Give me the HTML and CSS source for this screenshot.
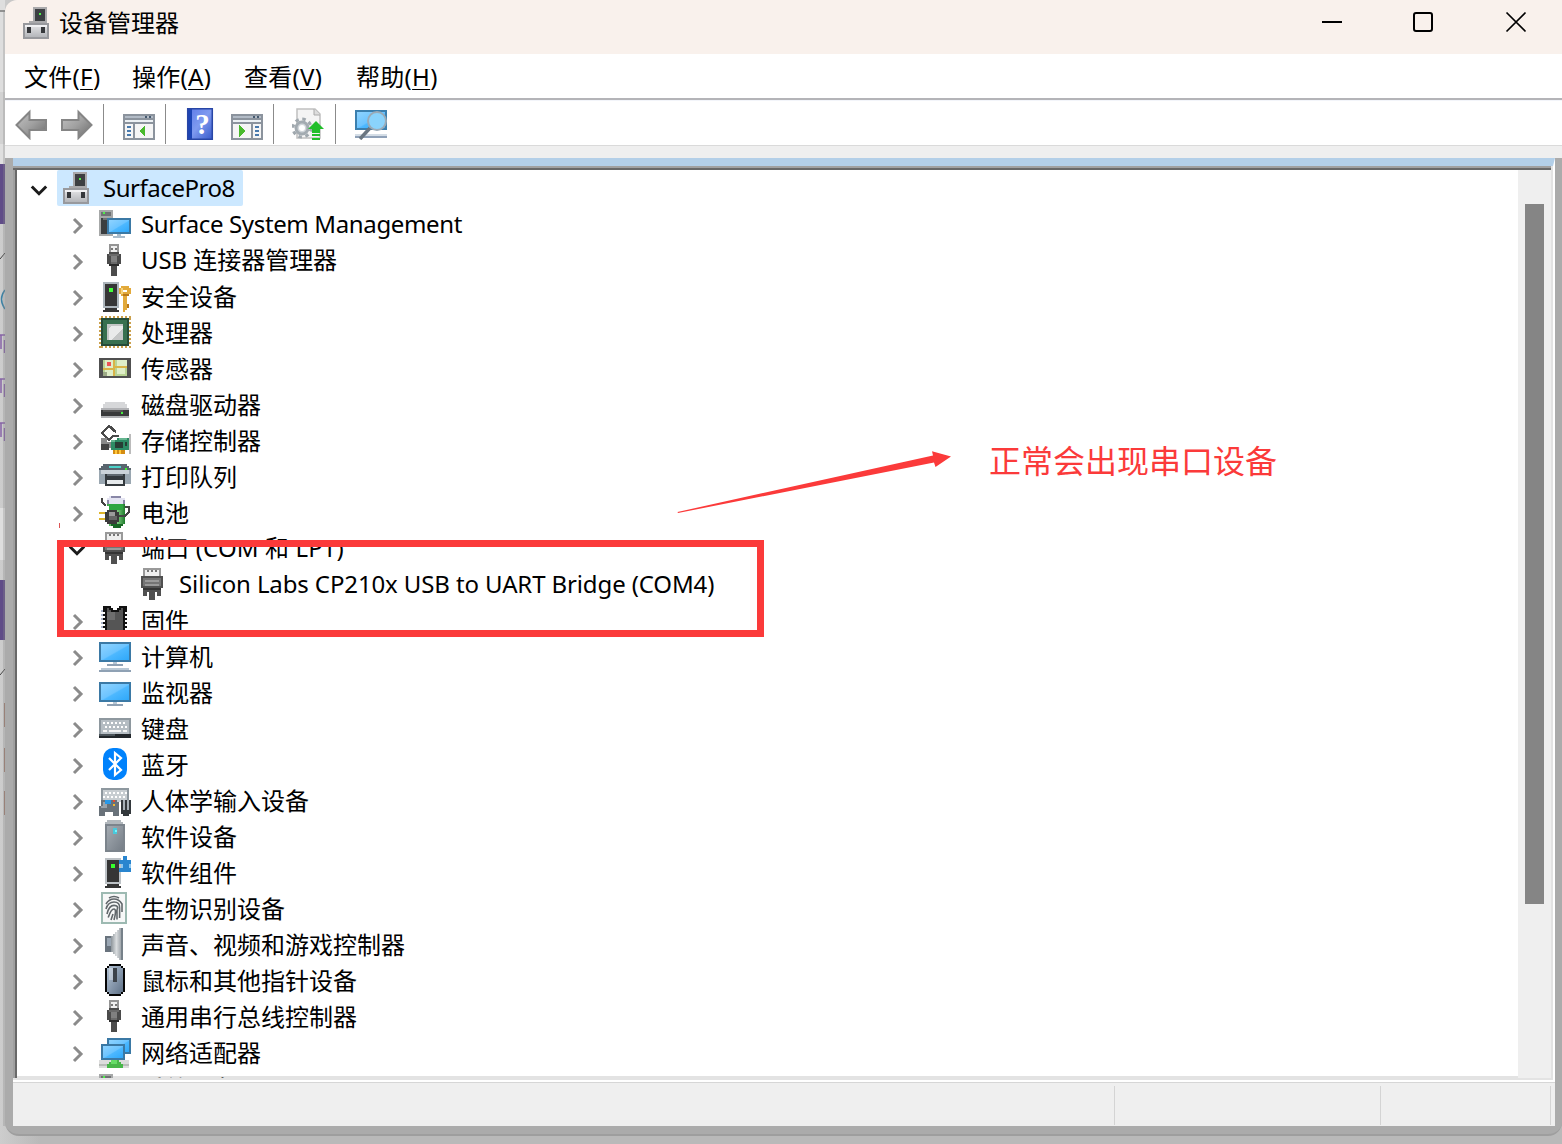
FILE: index.html
```html
<!DOCTYPE html>
<html lang="zh-CN">
<head>
<meta charset="utf-8">
<title>设备管理器</title>
<link rel="stylesheet" href="styles.css">
</head>
<body>
<svg class="defs" width="0" height="0" aria-hidden="true">
  <defs>
    <linearGradient id="screen" x1="0" y1="0" x2="1" y2="1"><stop offset="0" stop-color="#8fd3ff"/><stop offset=".5" stop-color="#6cc4ff"/><stop offset=".55" stop-color="#4db8ff"/><stop offset="1" stop-color="#2fa8fa"/></linearGradient>
    <linearGradient id="metal" x1="0" y1="0" x2="0" y2="1"><stop offset="0" stop-color="#e4e4e6"/><stop offset="1" stop-color="#b4b6ba"/></linearGradient>
    <linearGradient id="steel" x1="0" y1="0" x2="1" y2="1"><stop offset="0" stop-color="#a4abb2"/><stop offset="1" stop-color="#767e87"/></linearGradient>
    <linearGradient id="arrow" x1="0" y1="0" x2="1" y2="1"><stop offset="0" stop-color="#c4c4c4"/><stop offset=".5" stop-color="#a0a0a0"/><stop offset="1" stop-color="#6a6a6a"/></linearGradient>
    <linearGradient id="help" x1="0" y1="0" x2="1" y2="1"><stop offset="0" stop-color="#5b78e6"/><stop offset=".5" stop-color="#7f9af0"/><stop offset="1" stop-color="#3457c8"/></linearGradient>
    <linearGradient id="cone" x1="0" y1="0" x2="1" y2="0"><stop offset="0" stop-color="#8c949a"/><stop offset=".45" stop-color="#dadddf"/><stop offset="1" stop-color="#878f96"/></linearGradient>
    <linearGradient id="cell" x1="0" y1="0" x2="1" y2="0"><stop offset="0" stop-color="#2c9a3a"/><stop offset=".4" stop-color="#a2eda0"/><stop offset="1" stop-color="#1d7a2a"/></linearGradient>
    <linearGradient id="shell" x1="0" y1="0" x2="1" y2="1"><stop offset="0" stop-color="#b4c4d6"/><stop offset="1" stop-color="#5e7086"/></linearGradient>
  </defs>
  <symbol id="chev-r" viewBox="0 0 20 20"><path d="M7 3l7 7-7 7" fill="none" stroke="#8b8b8b" stroke-width="3"/></symbol>
  <symbol id="chev-d" viewBox="0 0 20 20"><path d="M2.800 6.500l7.200 7.200 7.200-7.200" fill="none" stroke="#1b1b1b" stroke-width="3"/></symbol>
  <symbol id="i-root" viewBox="0 0 16 16">
    <path fill="#a9a9ab" d="M6 0h7v8H6zM4 7h3v1H4z"/><path fill="#3c3f42" d="M7 1h5v6H7z"/><path fill="#4ff04a" d="M9 3h1v1H9z"/>
    <path fill="#98999d" d="M1 8h13v8H1z"/><path fill="url(#metal)" d="M2 9h11v6H2z"/><path fill="#f1f1f3" d="M2 9h11v1H2z"/><path fill="#36383b" d="M3 10h2v3H3zM10 10h2v3h-2z"/>
  </symbol>
  <symbol id="i-pc" viewBox="0 0 16 16">
    <path fill="#a6a8a8" d="M0 1h7v13H0z"/><path fill="#3b3e40" d="M1 5h4v8H1z"/><path fill="#707274" d="M1 2h5v2H1zM2 5h3v1H2z"/><path fill="#4ff04a" d="M2 2h1v1H2z"/>
    <path fill="#3b79a5" d="M4 5h12v8H4z"/><path fill="url(#screen)" d="M5 6h10v6H5z"/><path fill="#a9bccb" d="M9 13h2v1H9zM7 14h6v1H7z"/>
  </symbol>
  <symbol id="i-usb" viewBox="0 0 16 16">
    <path fill="#949494" d="M5 0h5v5H5z"/><path fill="#eee" d="M6 1h3v3H6z"/><path fill="#777" d="M6 2h1v1H6zM8 2h1v1H8z"/>
    <path fill="#4b4b4b" d="M5 4h5v1h1v5h-1v1H9v5H6v-5H5v-1H4V5h1z"/><path fill="#6a6a6a" d="M5 5h5v1H5zM6 6h3v4H6z"/><path fill="#808080" d="M6 6h3v3H6z"/><path fill="#2c2c2c" d="M5 10h5v1H5z"/>
  </symbol>
  <symbol id="i-sec" viewBox="0 0 16 16">
    <path fill="#acb5bb" d="M2 1h8v13H2z"/><path fill="#363636" d="M3 2h6v11H3zM2 15h8v1H2z"/><path fill="#363636" d="M3 14h6v1H3z"/><path fill="#43ff3a" d="M5 4h2v2H5z"/>
    <path fill="#e2a93a" d="M11 3h4v1h1v3h-1v1h-1v7h-1v1h-1V8h-1V7h-1V4h1z"/><path fill="#fff" d="M12 5h2v1h-2z"/><path fill="#f6d27c" d="M11 4h1v3h-1z"/><path fill="#b97818" d="M14 12h1v2h-1zM12 7h3v1h-3z"/>
  </symbol>
  <symbol id="i-cpu" viewBox="0 0 16 16">
    <path fill="none" stroke="#cba04c" stroke-dasharray="1 1" d="M1 .5h15M1 15.500h15M.5 1v15M15.500 1v15"/><path fill="#254b38" d="M1 1h14v14H1z"/><path fill="#38704f" d="M2 2h12v12H2z"/><path fill="#c4c6c6" d="M4 4h8v8H4z"/><path fill="#e9eaea" d="M5 10V6l1-1h6v1l-6 6H5z"/>
  </symbol>
  <symbol id="i-sensor" viewBox="0 0 16 16">
    <path fill="#505050" d="M0 3h16v10H0z"/><path fill="#b9d494" d="M2 4h12v8H2z"/><path fill="#dfeec8" d="M3 4h4v4H3zM9 4h5v3H9zM3 9h4v3H3zM9 8h4v3H9z"/><path fill="#d9b448" d="M7 4h1v8H7zM2 8h5v1H2zM8 7h6v1H8z"/><path fill="#ec5558" d="M4 5h2v2H4z"/><path fill="#9dab86" d="M2 10h2v2H2z"/>
  </symbol>
  <symbol id="i-disk" viewBox="0 0 16 16">
    <path fill="#d6d7d9" d="M3 7h10v1h1v2h1v1H1v-1h1V8h1z"/><path fill="#b0b1b4" d="M1 10h14v5H1z"/><path fill="#393a3b" d="M1 11h14v3H1z"/><path fill="#555" d="M2 11h10v1H2z"/><path fill="#45ed3f" d="M11 12h1v1h-1z"/>
  </symbol>
  <symbol id="i-storage" viewBox="0 0 16 16">
    <path fill="none" stroke="#4a4a4a" stroke-width="1.300" d="M8.500 4L5 1 1.500 4.500 5 8l2-2h3"/><path fill="#8a8a8a" d="M1 7h3v2h2v3H1z"/><path fill="#444" d="M1 10h4v3H1z"/><path fill="#bbb" d="M15 5h1v10h-1z"/>
    <path fill="#2d8b65" d="M6 8h3V7h6v6H6z"/><path fill="#66b590" d="M10 7h4v1h-4zM6 8h2v1H6z"/><path fill="#283d35" d="M8 9h4v3H8zM13 9h1v2h-1z"/><path fill="#d48c13" d="M7 13h6v2H7z"/><path fill="#ffc739" d="M8 13h1v2H8zM10 13h1v2h-1z"/>
  </symbol>
  <symbol id="i-printer" viewBox="0 0 16 16">
    <path fill="#59656e" d="M2 2h12v1h1v1h1v1H0V4h1V3h1z"/><path fill="#4bd2c9" d="M5 3h6v1H5z"/><path fill="#9aa7b1" d="M0 5h16v7H0z"/><path fill="#cbd3d9" d="M1 5h14v2H1z"/><path fill="#343a3e" d="M3 7h10v6H3z"/><path fill="#606970" d="M4 7h8v1H4z"/><path fill="#e6eaec" d="M4 10h8v2H4z"/><path fill="#3ef332" d="M13 4h1v1h-1z"/>
  </symbol>
  <symbol id="i-battery" viewBox="0 0 16 16">
    <path fill="#e4e4f2" d="M5 0h6v1h2v3H4V1h1z"/><path fill="#8987a7" d="M6 0h5v1H6zM4 2h1v2H4zM12 2h1v2h-1z"/><path fill="url(#cell)" d="M4 4h9v10h-1v1H9v1H7v-1H5V5H4z"/><path fill="#2fa542" d="M5 4h7v3H5z"/><path fill="#176624" d="M6 14h6v1h-1v1H7v-1H6z"/>
    <path fill="none" stroke="#444" stroke-width="1.200" d="M1.500 1v2l2 2M9 10h4l2-2V5.500h-2"/><path fill="#dfb52a" d="M0 8h4v1H0zM0 11h4v1H0z"/><path fill="#3b3b3b" d="M4 7h5v1h1v5H9v1H4v-1H3V8h1z"/><path fill="#9b9b9b" d="M5 8h3v2H5z"/><path fill="#666" d="M5 10h4v2H5z"/>
  </symbol>
  <symbol id="i-port" viewBox="0 0 16 16">
    <path fill="#999" d="M3 0h9v5H3z"/><path fill="#eee" d="M4 1h7v3H4z"/><path fill="#777" d="M5 1h1v1H5zM7 1h1v1H7zM9 1h1v1H9z"/><path fill="#505050" d="M2 4h11v6h-1v4h-2v-2H9v4H6v-4H5v2H3v-4H2z"/><path fill="#747474" d="M3 5h9v4H3z"/><path fill="#9a9a9a" d="M4 6h7v1H4zM4 8h7v1H4z"/><path fill="#343434" d="M3 10h9v1H3z"/>
  </symbol>
  <symbol id="i-firmware" viewBox="0 0 16 16">
    <path fill="none" stroke="#aeb7cc" stroke-width="2" stroke-dasharray="1 1" d="M2 3v12M13 3v12"/><path fill="#111" d="M2 1h4v1h1v1h2V2h1V1h4v3h-1v1h1v1h-1v1h1v1h-1v1h1v1h-1v1h1v1h-1v3H3v-3H2v-1h1v-1H2V9h1V8H2V7h1V6H2V5h1V4H2z"/><path fill="#555" d="M4 2h1v1h1v1h4V3h1V2h1v12H4z"/><path fill="#6e6e6e" d="M4 4h4v4H4z"/>
  </symbol>
  <symbol id="i-computer" viewBox="0 0 16 16">
    <path fill="#3b79a5" d="M0 1h16v10H0z"/><path fill="url(#screen)" d="M1 2h14v8H1z"/><path fill="#b9c8d5" d="M7 11h2v1H7zM1 14h14v1H1z"/><path fill="#8fa1b4" d="M4 12h8v1H4zM0 15h16v1H0z"/>
  </symbol>
  <symbol id="i-monitor" viewBox="0 0 16 16">
    <path fill="#3b79a5" d="M0 3h16v10H0z"/><path fill="url(#screen)" d="M1 4h14v8H1z"/><path fill="#b9c8d5" d="M7 13h2v1H7z"/><path fill="#8fa1b4" d="M4 14h8v1H4z"/>
  </symbol>
  <symbol id="i-keyboard" viewBox="0 0 16 16">
    <path fill="#8e989f" d="M0 3h16v8H0z"/><path fill="#b5bdc3" d="M1 4h14v7H1z"/><path fill="none" stroke="#fff" stroke-dasharray="1 1" d="M2 5.500h12M3 7.500h11"/><path fill="#f5f5f5" d="M2 9h2v1H2zM5 9h6v1H5zM12 9h2v1h-2z"/><path fill="#22272b" d="M0 11h16v2H0z"/><path fill="#4b545a" d="M0 11h8v1H0z"/>
  </symbol>
  <symbol id="i-bt" viewBox="0 0 16 16">
    <rect shape-rendering="geometricPrecision" x="2" width="12" height="16" rx="5" fill="#0082fc"/><path shape-rendering="geometricPrecision" fill="none" stroke="#fff" stroke-width="1.100" d="M5 5l6 6-3 2.500v-11L11 5l-6 6"/>
  </symbol>
  <symbol id="i-hid" viewBox="0 0 16 16">
    <path fill="#8e989f" d="M1 2h14v7H1z"/><path fill="#c7cdd1" d="M2 3h12v6H2z"/><path fill="none" stroke="#fff" stroke-dasharray="1 1" d="M3 4.500h11M2 6.500h12"/><path fill="#69727a" d="M1 8h8v1h1v7H7v-2H3v2H0v-5h1z"/><path fill="#9aa2a9" d="M2 9h2v3H1v-1h1z"/><path fill="#2898e7" d="M3 8h3v2H3z"/><path fill="#e44b33" d="M7 8h1v1H7z"/><path fill="#f2ba30" d="M7 10h1v1H7z"/><path fill="#33383c" d="M11 8h5v7h-1v1h-3v-1h-1z"/><path fill="#a7b0b7" d="M12 8h1v5h-1zM14 8h1v5h-1z"/>
  </symbol>
  <symbol id="i-softdev" viewBox="0 0 16 16">
    <path fill="#b2b8bd" d="M4 0h7v1h1v1h1v14H3V1h1z"/><path fill="#7c848c" d="M3 2h10v14H3z"/><path fill="url(#steel)" d="M4 3h8v12H4z"/><path fill="#48c9dc" d="M7 4h2v3H7z"/><path fill="#75f5ff" d="M8 5h1v1H8z"/>
  </symbol>
  <symbol id="i-softcomp" viewBox="0 0 16 16">
    <path fill="#bdc2c6" d="M3 1h8v13H3z"/><path fill="#353535" d="M4 2h6v11H4zM3 15h8v1H3zM4 14h6v1H4z"/><path fill="#36ff2c" d="M6 4h2v2H6z"/><path fill="#2985cf" d="M12 0h2v2h2v6h-6V6h1V4h-1V2h2z"/><path fill="#8ec8f1" d="M11 4h1v2h-1zM15 4h1v2h-1z"/>
  </symbol>
  <symbol id="i-bio" viewBox="0 0 16 16">
    <path fill="#9dbab2" d="M1 0h13v16H1z"/><path fill="#f7f8f8" d="M2 1h11v14H2z"/><g shape-rendering="geometricPrecision" fill="none" stroke="#61676b" stroke-width=".8"><path d="M5 3Q7.500 1.500 10 3M3.500 6Q5 3.500 7.500 3.500T11.500 6v4M3.500 8.500Q4.500 5 7.500 5t2.800 3v5M4 11q1-4.300 3.500-4.300T9 9v4.800M4.600 12.800Q6 8.500 7.500 8.500T7.500 14M6 14l1-3"/></g>
  </symbol>
  <symbol id="i-sound" viewBox="0 0 16 16">
    <path fill="#69737d" d="M3 4h3v8H3z"/><path fill="#9ba7b4" d="M4 5h2v4H4z"/><path fill="url(#cone)" d="M6 4h1V3h1V2h1V1h1V0h2v16h-2v-1H9v-1H8v-1H7v-1H6z"/><path fill="#77818a" d="M11 0h1v16h-1z"/>
  </symbol>
  <symbol id="i-mouse" viewBox="0 0 16 16">
    <path fill="#050505" d="M5 0h6v1h1v1h1v12h-1v1h-1v1H5v-1H4v-1H3V2h1V1h1z"/><path fill="url(#shell)" d="M5 1h6v1h1v12h-1v1H5v-1H4V2h1z"/><path fill="#fff" opacity=".35" d="M5 2h2v6H5z"/><path fill="#3c4249" d="M7 2h2v7H7z"/>
  </symbol>
  <symbol id="i-net" viewBox="0 0 16 16">
    <path fill="#3b79a5" d="M4 1h12v8H4z"/><path fill="url(#screen)" d="M5 2h10v6H5z"/><path fill="#dcdcdc" d="M0 12h15v4H0z"/><path fill="#b9bcb9" d="M0 14h15v1H0z"/><path fill="#3b79a5" d="M1 4h12v8H1z"/><path fill="url(#screen)" d="M2 5h10v6H2z"/><path fill="#48b649" d="M6 12h4v1h1v1h1v2H4v-2h1v-1h1z"/><path fill="#65dc65" d="M6 12h3v2H6z"/>
  </symbol>
</svg>

<div class="desktop">
  <svg class="behind" viewBox="0 0 5 1144" width="5" height="1144">
    <path fill="#dedede" d="M0 0h5v92H0z"/><path fill="#d2d2d2" d="M0 92h5v52H0z"/><path fill="#dfdfdf" d="M0 144h5v20H0zM0 508h5v52H0z"/>
    <path fill="#604c88" d="M0 164h5v60H0zM0 580h5v60H0z"/>
    <path fill="none" stroke="#444" d="M0 259l5-6M0 675l5-6M0 11h5"/><path fill="none" stroke="#3d82a4" stroke-width="1.500" d="M5 290q-7 9 0 19"/>
    <path fill="none" stroke="#8663a6" stroke-width="1.500" d="M0 335h5M1 335v14M4.500 340v13M0 379h5M1 379v14M4.500 384v13M0 423h5M1 423v14M4.500 428v13"/><path fill="#a17e72" d="M4 703h1v24H4zM4 748h1v24H4zM4 791h1v24H4z"/>
    <path fill="#888" d="M3 10h2v1116H3z" opacity=".3"/>
  </svg>
  <main class="window">
    <header class="titlebar">
      <svg class="app-icon" width="32" height="32"><use href="#i-root"/></svg>
      <h1 class="title">设备管理器</h1>
      <svg class="captions" width="230" height="54" viewBox="0 0 230 54" fill="none" stroke="#000" stroke-width="2">
        <path shape-rendering="crispEdges" d="M17 22h20"/><rect x="109" y="13" width="18" height="18" rx="2"/><path stroke-width="1.700" d="M201.500 12.500l19 19M220.500 12.500l-19 19"/>
      </svg>
    </header>
    <nav class="menubar">
      <span>文件(<u>F</u>)</span><span>操作(<u>A</u>)</span><span>查看(<u>V</u>)</span><span>帮助(<u>H</u>)</span>
    </nav>
    <div class="toolbar">
      <svg class="tool" viewBox="0 0 32 32"><path d="M1.500 17L14.500 4v8H31v10H14.500v8z" fill="url(#arrow)" stroke="#858585" stroke-width="2"/></svg>
      <svg class="tool gap14" viewBox="0 0 32 32"><path d="M30.500 17L17.500 4v8H1v10h16.500v8z" fill="url(#arrow)" stroke="#858585" stroke-width="2"/></svg>
      <i class="sep sep-a"></i>
      <svg class="tool" viewBox="0 0 32 32" shape-rendering="crispEdges"><path fill="#8b939d" d="M0 6h32v26H0z"/><path fill="#b2bbc6" d="M2 8h28v2H2z"/><path fill="#edf1f4" d="M2 12h28v2H2z"/><path fill="#f5f5f5" d="M2 16h8v14H2zM12 16h18v14H12z"/><path stroke="#4779ad" stroke-width="2" d="M4 19h4M4 23h4M4 27h4"/><path fill="#45596f" d="M22 8h2v2h-2zM26 8h2v2h-2z"/><path fill="#48b92c" d="M16 23l6-6v12z"/></svg>
      <i class="sep sep-b"></i>
      <svg class="tool help" viewBox="0 0 32 32"><path fill="url(#help)" d="M3 0h26v32H3z"/><path fill="#1c44b5" d="M3 0h5v32H3z"/><path fill="none" stroke="#2846a6" stroke-width="1.500" d="M3.700.7h24.600v30.600H3.700z"/><text x="18.500" y="25.500" class="qmark">?</text></svg>
      <svg class="tool gap15" viewBox="0 0 32 32" shape-rendering="crispEdges"><path fill="#8b939d" d="M0 6h32v26H0z"/><path fill="#b2bbc6" d="M2 8h28v2H2z"/><path fill="#edf1f4" d="M2 12h28v2H2z"/><path fill="#f5f5f5" d="M2 16h18v14H2zM22 16h8v14h-8z"/><path stroke="#4779ad" stroke-width="2" d="M24 19h4M24 23h4M24 27h4"/><path fill="#45596f" d="M22 8h2v2h-2zM26 8h2v2h-2z"/><path fill="#48b92c" d="M8 17l6 6-6 6z"/></svg>
      <i class="sep sep-b"></i>
      <svg class="tool" viewBox="0 0 32 32"><path fill="#f4f4f4" stroke="#c0c0c0" stroke-width="1.500" d="M5 1h18l5 5v24H5z"/><path fill="#ddd" stroke="#aaa" d="M22 1v6h6"/><circle cx="10" cy="20" r="6" fill="#d1d6da" stroke="#a3abb1" stroke-width="3"/><circle cx="10" cy="20" r="9" fill="none" stroke="#a0a8ae" stroke-width="3" stroke-dasharray="3.500 3.570"/><circle cx="10" cy="20" r="3" fill="#fff"/><path fill="#22be2b" d="M24 13l8 8h-4v4h-8v-4h-4z"/><path fill="#22be2b" d="M20 26h8v2h-8zM20 30h8v2h-8z"/></svg>
      <i class="sep sep-c"></i>
      <svg class="tool" viewBox="0 0 32 32"><path fill="#3b7fae" d="M0 2h32v20H0z"/><path fill="url(#screen)" d="M2 4h28v16H2z"/><path fill="#8fa1b8" d="M0 28h32v2H0z"/><path fill="#d4dde6" d="M0 26h32v2H0z"/><path stroke="#697580" stroke-width="3.500" d="M15 20L5 31"/><circle cx="22" cy="13" r="9" fill="#8ad3fc" stroke="#9aaab7" stroke-width="2"/></svg>
    </div>
    <div class="spacer"></div>
    <div class="frame">
      <div class="client">
        <ul class="tree">
          <li class="row"><svg class="chev"><use href="#chev-d"/></svg><span class="entry selected"><svg class="icon"><use href="#i-root"/></svg><span class="host">SurfacePro8</span></span></li>
          <li class="row child"><svg class="chev"><use href="#chev-r"/></svg><span class="entry"><svg class="icon"><use href="#i-pc"/></svg><span class="latin">Surface System Management</span></span></li>
          <li class="row child"><svg class="chev"><use href="#chev-r"/></svg><span class="entry"><svg class="icon"><use href="#i-usb"/></svg><span class="mixed">USB 连接器管理器</span></span></li>
          <li class="row child"><svg class="chev"><use href="#chev-r"/></svg><span class="entry"><svg class="icon"><use href="#i-sec"/></svg><span>安全设备</span></span></li>
          <li class="row child"><svg class="chev"><use href="#chev-r"/></svg><span class="entry"><svg class="icon"><use href="#i-cpu"/></svg><span>处理器</span></span></li>
          <li class="row child"><svg class="chev"><use href="#chev-r"/></svg><span class="entry"><svg class="icon"><use href="#i-sensor"/></svg><span>传感器</span></span></li>
          <li class="row child"><svg class="chev"><use href="#chev-r"/></svg><span class="entry"><svg class="icon"><use href="#i-disk"/></svg><span>磁盘驱动器</span></span></li>
          <li class="row child"><svg class="chev"><use href="#chev-r"/></svg><span class="entry"><svg class="icon"><use href="#i-storage"/></svg><span>存储控制器</span></span></li>
          <li class="row child"><svg class="chev"><use href="#chev-r"/></svg><span class="entry"><svg class="icon"><use href="#i-printer"/></svg><span>打印队列</span></span></li>
          <li class="row child"><svg class="chev"><use href="#chev-r"/></svg><span class="entry"><svg class="icon"><use href="#i-battery"/></svg><span>电池</span></span></li>
          <li class="row child"><svg class="chev"><use href="#chev-d"/></svg><span class="entry"><svg class="icon"><use href="#i-port"/></svg><span class="ports">端口 (COM 和 LPT)</span></span></li>
          <li class="row grandchild"><i class="chev"></i><span class="entry"><svg class="icon"><use href="#i-port"/></svg><span class="device">Silicon Labs CP210x USB to UART Bridge (COM4)</span></span></li>
          <li class="row child"><svg class="chev"><use href="#chev-r"/></svg><span class="entry"><svg class="icon"><use href="#i-firmware"/></svg><span>固件</span></span></li>
          <li class="row child"><svg class="chev"><use href="#chev-r"/></svg><span class="entry"><svg class="icon"><use href="#i-computer"/></svg><span>计算机</span></span></li>
          <li class="row child"><svg class="chev"><use href="#chev-r"/></svg><span class="entry"><svg class="icon"><use href="#i-monitor"/></svg><span>监视器</span></span></li>
          <li class="row child"><svg class="chev"><use href="#chev-r"/></svg><span class="entry"><svg class="icon"><use href="#i-keyboard"/></svg><span>键盘</span></span></li>
          <li class="row child"><svg class="chev"><use href="#chev-r"/></svg><span class="entry"><svg class="icon"><use href="#i-bt"/></svg><span>蓝牙</span></span></li>
          <li class="row child"><svg class="chev"><use href="#chev-r"/></svg><span class="entry"><svg class="icon"><use href="#i-hid"/></svg><span>人体学输入设备</span></span></li>
          <li class="row child"><svg class="chev"><use href="#chev-r"/></svg><span class="entry"><svg class="icon"><use href="#i-softdev"/></svg><span>软件设备</span></span></li>
          <li class="row child"><svg class="chev"><use href="#chev-r"/></svg><span class="entry"><svg class="icon"><use href="#i-softcomp"/></svg><span>软件组件</span></span></li>
          <li class="row child"><svg class="chev"><use href="#chev-r"/></svg><span class="entry"><svg class="icon"><use href="#i-bio"/></svg><span>生物识别设备</span></span></li>
          <li class="row child"><svg class="chev"><use href="#chev-r"/></svg><span class="entry"><svg class="icon"><use href="#i-sound"/></svg><span>声音、视频和游戏控制器</span></span></li>
          <li class="row child"><svg class="chev"><use href="#chev-r"/></svg><span class="entry"><svg class="icon"><use href="#i-mouse"/></svg><span>鼠标和其他指针设备</span></span></li>
          <li class="row child"><svg class="chev"><use href="#chev-r"/></svg><span class="entry"><svg class="icon"><use href="#i-usb"/></svg><span>通用串行总线控制器</span></span></li>
          <li class="row child"><svg class="chev"><use href="#chev-r"/></svg><span class="entry"><svg class="icon"><use href="#i-net"/></svg><span>网络适配器</span></span></li>
          <li class="row child"><svg class="chev"><use href="#chev-r"/></svg><span class="entry"><svg class="icon"><use href="#i-pc"/></svg><span>系统设备</span></span></li>
        </ul>
        <div class="scrollbar"><div class="thumb"></div></div>
      </div>
      <footer class="statusbar"><span class="pane"></span><span class="pane middle"></span><span class="pane last"></span></footer>
    </div>
  </main>

  <div class="mark-box"></div>
  <svg class="mark-arrow" width="280" height="70" viewBox="0 0 280 70"><path fill="#fb3a3a" d="M2.500 66L258 9.500l-1-4.200L276 10.500 260.500 21l-1.500-4.500L3 67z"/></svg>
  <i class="mark-dot"></i>
  <p class="mark-text">正常会出现串口设备</p>
</div>
</body>
</html>
```
FILE: styles.css
```css
* { box-sizing: border-box; }
body {
  margin: 0;
  width: 1562px;
  height: 1144px;
  overflow: hidden;
  font-family: "Noto Sans", "Noto Sans CJK SC", sans-serif;
  font-size: 24px;
  line-height: 36px;
  color: #000;
}
.defs { position: absolute; }
.desktop {
  position: relative;
  display: flex;
  width: 1562px;
  height: 1144px;
  background: linear-gradient(90deg, #cdcdcd, #b9b9b9 40px);
}
.behind { flex: none; display: block; }
.window {
  flex: 1;
  display: flex;
  flex-direction: column;
  height: 1136px;
}
.window > * { flex-shrink: 0; }

.titlebar {
  display: flex;
  height: 54px;
  padding: 7px 0 0 16px;
  background: #f9f1ec;
  border-top-left-radius: 12px;
}
.app-icon { margin-right: 6px; }
.title {
  flex: 1;
  margin: -2px 0 0;
  font-size: 24px;
  font-weight: 400;
}
.captions { margin: -7px 27px 0 0; }

.menubar {
  display: flex;
  height: 46px;
  padding: 5px 20px 0 19px;
  background: #fff;
  border-bottom: 2px solid #b4b4b8;
  letter-spacing: 0.3px;
}
.menubar span { width: 112px; }
.menubar span:first-child { width: 108px; }
.menubar u {
  text-decoration-thickness: 1px;
  text-underline-offset: 3px;
}

.toolbar {
  display: flex;
  height: 46px;
  padding: 4px 0 0 10px;
  background: #fff;
  border-top: 1px solid #f3f5fa;
  border-bottom: 1px solid #dadada;
}
.tool { width: 32px; height: 32px; margin-top: 3px; }
.gap14 { margin-left: 14px; }
.gap15 { margin-left: 15px; }
.sep { width: 1px; height: 40px; background: #8b8b8b; }
.sep-a { margin: -1px 19px 0 10px; }
.sep-b { margin: -1px 18px 0 10px; }
.sep + .tool + .sep-c { margin: -1px 19px 0 11px; }
.qmark {
  font: bold 29px "Liberation Serif", serif;
  fill: #fff;
  text-anchor: middle;
}
.spacer { height: 12px; background: #efefef; }

.frame {
  display: flex;
  flex-direction: column;
  height: 978px;
  padding: 0 7px 8px 8px;
  background: #ababab;
  border-bottom: 2px solid #9e9e9e;
  border-radius: 0 0 14px 14px;
}
.client {
  flex: none;
  display: flex;
  height: 924px;
  background: #fff;
  border-top: 8px solid #b3cfe8;
  border-right: 2px solid #fff;
}
.tree {
  flex: 1;
  height: 914px;
  margin: 0;
  padding: 0;
  overflow: hidden;
  list-style: none;
  background: #fff;
  border-style: solid;
  border-width: 4px 0 2px 4px;
  border-color: #686868 #e3e3e3 #e3e3e3 #696969;
  border-top-style: groove;
  border-left-style: groove;
  border-top-color: #a0a0a0;
  border-left-color: #a0a0a0;
  border-image: linear-gradient(90deg, #a0a0a0 2px, #696969 2px, #696969 4px, transparent 4px) 0 0 0 4;
  box-shadow: inset 0 -2px #e3e3e3;
}
.tree, .scrollbar {
  background-image: linear-gradient(#a0a0a0 2px, #686868 2px, #686868 4px, transparent 4px, transparent 912px, #e3e3e3 912px);
  background-origin: border-box;
}
.row { display: flex; height: 36px; }
.child { padding-left: 38px; }
.grandchild { padding-left: 76px; }
.chev {
  flex: none;
  width: 20px;
  height: 20px;
  margin: 10px 8px 0 12px;
}
.entry {
  display: flex;
  height: 36px;
  padding: 0 8px 0 4px;
  white-space: pre;
}
.entry > span:not([class]) { margin-top: 1px; }
.selected { background: #cce8ff; border-radius: 2px; }
.icon {
  flex: none;
  width: 32px;
  height: 32px;
  margin: 2px 10px 0 0;
  shape-rendering: crispEdges;
}
.host { letter-spacing: -0.46px; }
.latin { letter-spacing: -0.36px; }
.mixed { letter-spacing: -0.05px; }
.device { letter-spacing: -0.12px; }
.ports { letter-spacing: 0.15px; }

.scrollbar {
  width: 35px;
  height: 914px;
  padding: 38px 0 0 7px;
  background-color: #efefef;
  border-right: 2px solid #e3e3e3;
}
.thumb {
  width: 19px;
  height: 700px;
  background: #858585;
}
.statusbar {
  flex: none;
  display: flex;
  height: 44px;
  padding: 3px 4px 1px 0;
  background: #efefef;
  border-top: 1px solid #d6d6d6;
}
.pane { flex: 1; border-right: 1px solid #d4d4d4; }
.middle { flex: 0 0 266px; }
.last { flex: 0 0 170px; }

.mark-box {
  position: absolute;
  left: 57px;
  top: 540px;
  width: 707px;
  height: 97px;
  border: 7px solid #fb3a3a;
}
.mark-arrow { position: absolute; left: 675px; top: 446px; }
.mark-dot {
  position: absolute;
  left: 59px;
  top: 523px;
  width: 1px;
  height: 5px;
  background: #d55;
}
.mark-text {
  position: absolute;
  left: 989px;
  top: 441px;
  margin: 0;
  font-size: 32px;
  line-height: 40px;
  color: #fb3a3a;
}
```
